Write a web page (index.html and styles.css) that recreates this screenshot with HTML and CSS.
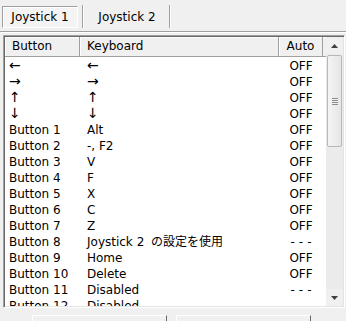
FILE: index.html
```html
<!DOCTYPE html>
<html lang="ja">
<head>
  <meta charset="UTF-8" />
  <meta name="viewport" content="width=device-width, initial-scale=1" />
  <title>Joystick</title>
  <link rel="stylesheet" href="styles.css">
</head>
<body>
  <div class="tabs">
    <div class="tab active">Joystick 1</div>
    <span class="sep"></span>
    <div class="tab">Joystick 2</div>
    <span class="sep"></span>
  </div>
  <div class="rule"></div>

  <div class="list">
    <div class="list-body">
      <div class="row head">
        <div class="hcell">Button</div>
        <div class="hcell">Keyboard</div>
        <div class="hcell center">Auto</div>
      </div>
      <div class="rows">
        <div class="row"><div class="c1 arr">←</div><div class="c2 arr">←</div><div class="c3">OFF</div></div>
        <div class="row"><div class="c1 arr">→</div><div class="c2 arr">→</div><div class="c3">OFF</div></div>
        <div class="row"><div class="c1 arr">↑</div><div class="c2 arr">↑</div><div class="c3">OFF</div></div>
        <div class="row"><div class="c1 arr">↓</div><div class="c2 arr">↓</div><div class="c3">OFF</div></div>
        <div class="row"><div class="c1">Button 1</div><div class="c2">Alt</div><div class="c3">OFF</div></div>
        <div class="row"><div class="c1">Button 2</div><div class="c2">-, F2</div><div class="c3">OFF</div></div>
        <div class="row"><div class="c1">Button 3</div><div class="c2">V</div><div class="c3">OFF</div></div>
        <div class="row"><div class="c1">Button 4</div><div class="c2">F</div><div class="c3">OFF</div></div>
        <div class="row"><div class="c1">Button 5</div><div class="c2">X</div><div class="c3">OFF</div></div>
        <div class="row"><div class="c1">Button 6</div><div class="c2">C</div><div class="c3">OFF</div></div>
        <div class="row"><div class="c1">Button 7</div><div class="c2">Z</div><div class="c3">OFF</div></div>
        <div class="row"><div class="c1">Button 8</div><div class="c2">Joystick 2 <span class="jp">の設定を使用</span></div><div class="c3 dash">---</div></div>
        <div class="row"><div class="c1">Button 9</div><div class="c2">Home</div><div class="c3">OFF</div></div>
        <div class="row"><div class="c1">Button 10</div><div class="c2">Delete</div><div class="c3">OFF</div></div>
        <div class="row"><div class="c1">Button 11</div><div class="c2">Disabled</div><div class="c3 dash">---</div></div>
        <div class="row"><div class="c1">Button 12</div><div class="c2">Disabled</div><div class="c3 dash">---</div></div>
      </div>
    </div>
    <div class="scrollbar">
      <div class="arrow">
        <svg width="7" height="4" viewBox="0 0 7 4"><polygon points="0,4 7,4 3.5,0" fill="#404040"/></svg>
      </div>
      <div class="thumb"><span class="grip"></span></div>
      <div class="track"></div>
      <div class="arrow">
        <svg width="7" height="4" viewBox="0 0 7 4"><polygon points="0,0 7,0 3.5,4" fill="#404040"/></svg>
      </div>
    </div>
  </div>

  <div class="buttons">
    <div class="btn"></div>
    <div class="btn"></div>
  </div>
</body>
</html>
```

FILE: styles.css
```css
body {
  margin: 0;
  width: 346px;
  height: 321px;
  overflow: hidden;
  background: #f0f0f0;
  color: #000;
  font-family: "DejaVu Sans", "Noto Sans CJK JP", sans-serif;
  font-size: 12px;
}
.tabs {
  display: flex;
  align-items: stretch;
  height: 23px;
  padding: 5px 0 0 2px;
}
.tab {
  width: 76px;
  display: flex;
  align-items: center;
  justify-content: center;
  box-sizing: border-box;
  margin-top: 1px;
}
.tab.active {
  background: #f4f4f4;
  border: 1px solid #a0a0a0;
  border-right-color: #fff;
  border-bottom-color: #fff;
  box-shadow: inset 1px 1px 0 #fff;
}
.sep {
  width: 1px;
  margin: 0 5px 0 4px;
  background: #a0a0a0;
  border-right: 1px solid #fff;
}
.rule {
  margin-top: 3px;
  height: 1px;
  background: #a0a0a0;
  border-bottom: 1px solid #fff;
}
.list {
  display: flex;
  margin: 2px 0 0 3px;
  width: 342px;
  height: 273px;
  box-sizing: border-box;
  border: 1px solid;
  border-color: #a0a0a0 #fff #fff #a0a0a0;
  box-shadow: inset 1px 1px 0 #696969, inset -1px -1px 0 #e3e3e3;
  padding: 1px;
  background: #fff;
}
.list-body {
  width: 321px;
  overflow: hidden;
}
.row {
  display: grid;
  grid-template-columns: 75px 199px 44px;
  height: 16px;
  line-height: 16px;
  white-space: nowrap;
}
.row.head {
  height: 19px;
  line-height: 18px;
  background: #f0f0f0;
  border-bottom: 1px solid #a0a0a0;
  grid-template-columns: 75px 199px 44px 3px;
}
.row.head::after {
  content: "";
  box-shadow: inset 0 1px 0 #fff;
}
.hcell {
  padding-left: 7px;
  border-right: 1px solid #a0a0a0;
  box-shadow: inset 1px 1px 0 #fff;
}
.hcell.center {
  padding-left: 0;
  text-align: center;
}
.rows {
  padding-top: 1px;
}
.c1 {
  padding-left: 4px;
}
.c2 {
  padding-left: 7px;
}
.c3 {
  text-align: center;
}
.arr {
  font-size: 14px;
  line-height: 15px;
  height: 16px;
  overflow: hidden;
}
.jp {
  margin-left: 3px;
}
.dash {
  letter-spacing: 4px;
  text-indent: 4px;
}
.scrollbar {
  width: 17px;
  display: flex;
  flex-direction: column;
  background: #ebebeb;
}
.arrow {
  height: 17px;
  display: flex;
  align-items: center;
  justify-content: center;
  background: #f0f0f0;
}
.thumb {
  height: 92px;
  margin: 1px 1px 0 1px;
  box-sizing: border-box;
  border: 1px solid #b8b8b8;
  border-radius: 2px;
  background: linear-gradient(to right, #f4f4f4, #e6e6e6);
  display: flex;
  align-items: center;
  justify-content: center;
}
.grip {
  width: 6px;
  height: 5px;
  border-top: 1px solid #8c8c8c;
  border-bottom: 1px solid #8c8c8c;
  background: linear-gradient(#f0f0f0 0 1px, #8c8c8c 1px 2px, #f0f0f0 2px 3px, #8c8c8c 3px 4px, #f0f0f0 4px);
}
.track {
  flex: 1;
}
.buttons {
  display: flex;
  gap: 9px;
  margin: 7px 0 0 32px;
}
.btn {
  width: 135px;
  height: 20px;
  box-sizing: border-box;
  border: 1px solid;
  border-color: #fff #696969 #696969 #fff;
}
```
